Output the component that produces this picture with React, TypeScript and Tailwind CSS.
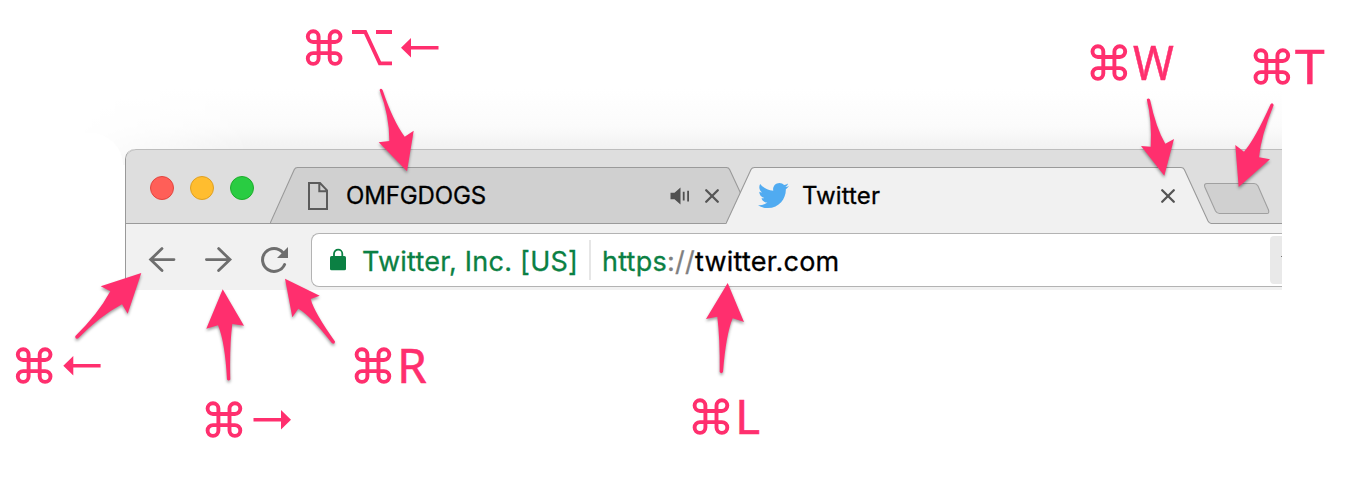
import React from "react";
import { FaTwitter } from "react-icons/fa";

const PINK = "#ff2f6e";

function CommandIcon({ x, y }: { x: number; y: number }) {
  return (
    <path
      transform={`translate(${x} ${y})`}
      d="M23.7 7.2v21.9a5.4 5.4 0 1 0 5.4-5.4H7.2a5.4 5.4 0 1 0 5.4 5.4V7.2a5.4 5.4 0 1 0-5.4 5.4h21.9a5.4 5.4 0 1 0-5.4-5.4z"
      fill="none"
      stroke={PINK}
      strokeWidth="3.9"
    />
  );
}

const commands: [number, number][] = [
  [306, 29.4],
  [1090.7, 44.4],
  [1253.7, 48.4],
  [16, 347.4],
  [205.8, 401.4],
  [354.8, 347.4],
  [692.8, 398.4],
];

const pointers = [
  "M379.6 90Q380.8 87.7 382.6 90Q393 121 404.7 136.7L413.7 130.7L407 171.3L378.7 142.3L389.3 141Q389.5 116 379.6 90Z",
  "M1146.8 99.5Q1148.3 97.3 1150 99.5Q1156 128 1165.3 143.7L1174 139L1164.3 175.7L1141 146L1150.7 146.7Q1152 120 1146.8 99.5Z",
  "M1270.7 104Q1272.5 102 1273.7 105Q1261 136 1259 157.3L1270 159.3L1238.7 187L1235.3 145L1244 151.7Q1255 139 1270.7 104Z",
  "M75.4 336Q74.6 339.3 78 338.5Q100 316 122 304.3L127.7 313.7L141.3 273L100.7 286.3L110.3 291.3Q98 314 75.4 336Z",
  "M227 379.5Q228.7 381.7 230.3 379.5Q229.5 345 232.3 324L244 325.7L222.7 289.3L206.3 328.7L218 325.3Q225 342 227 379.5Z",
  "M332 343.3Q335 344.6 335 341.5Q314 312 310.7 299L319.7 295.7L285 278.7L292.3 317.3L298.3 308.7Q311 316 332 343.3Z",
  "M719.7 372Q721.3 374.3 723 372Q726 334 732.7 318.3L744 322L727.7 283L706 319L717.3 316.7Q720 338 719.7 372Z",
];

function Annotations() {
  return (
    <div className="pointer-events-none absolute inset-0">
      <svg width="1348" height="502" viewBox="0 0 1348 502" className="absolute left-0 top-0">
        <g className="drop-shadow-[0_2px_1.5px_rgba(0,0,0,0.38)]">
          {pointers.map((d) => (
            <path key={d} d={d} fill={PINK} />
          ))}
        </g>
        {commands.map(([x, y]) => (
          <CommandIcon key={x} x={x} y={y} />
        ))}
        <path d="M352 32h13.2l14.6 31.3H392M376 32h16" fill="none" stroke={PINK} strokeWidth="3.8" />
        <path d="M401 47.7l10-9.7v8h27.5v3.4H411v8z" fill={PINK} />
        <path d="M63.3 365.7l10-9.7v8h27.3v3.4H73.3v8z" fill={PINK} />
        <path d="M291 419.7l-10-9.7v8h-27.5v3.4H281v8z" fill={PINK} />
      </svg>
      <Key className="left-[1133px] top-[27px] scale-x-[0.915]">W</Key>
      <Key className="left-[1295px] top-[31px] scale-x-[1.11]">T</Key>
      <Key className="left-[397px] top-[330px]">R</Key>
      <Key className="left-[735px] top-[381px]">L</Key>
    </div>
  );
}

function Key({ className, children }: { className: string; children: React.ReactNode }) {
  return (
    <span
      className={`absolute origin-left font-['Noto_Sans',sans-serif] text-[48px] leading-[70px] text-[#ff2f6e] [-webkit-text-stroke:0.5px_#ff2f6e] ${className}`}
    >
      {children}
    </span>
  );
}

function CloseIcon() {
  return (
    <svg width="16" height="16" viewBox="0 0 16 16" stroke="#555" strokeWidth="2.3" strokeLinecap="round">
      <path d="M2.2 2.2l11.6 11.6M13.8 2.2L2.2 13.8" />
    </svg>
  );
}

function TabStrip() {
  return (
    <div className="flex h-[75px] items-start rounded-tl-[10px] border-t border-[#bdbdbd] bg-[#dedede] shadow-[inset_0_-1px_0_#9a9a9a]">
      <div className="flex gap-4 pl-6 pt-[26px]">
        <i className="size-6 rounded-full border border-[#e2463f] bg-[#ff5f58]" />
        <i className="size-6 rounded-full border border-[#dfa023] bg-[#ffbd2f]" />
        <i className="size-6 rounded-full border border-[#1dad2b] bg-[#29cc42]" />
      </div>
      <div className="relative ml-4 mt-[16px] flex h-[59px] w-[456px] items-center">
        <svg width="474" height="59" className="absolute left-0 top-0">
          <path
            d="M0 57.5L24.3 3.6Q25.3 1.5 27.5 1.5H456.5Q458.6 1.5 459.6 3.6L471 28L458 57.5Z"
            fill="#d0d0d0"
            stroke="#9a9a9a"
            strokeWidth="1.1"
          />
        </svg>
        <svg width="22" height="30" viewBox="0 0 22 30" className="relative ml-[37px]" fill="none" stroke="#5b5b5b" strokeWidth="2">
          <path d="M2 2h11l7 7.3V28H2zM12.3 2v8.3H20" />
        </svg>
        <span className="relative ml-[17px] w-[324px] text-2xl leading-[30px] tracking-[-0.15px] text-black [-webkit-text-stroke:0.3px_black]">OMFGDOGS</span>
        <svg width="20" height="18" viewBox="0 0 20 18" className="relative shrink-0" fill="#505050">
          <path d="M0.5 5.8h4l6-5.3v17l-6-5.3h-4zM12.8 4.7h1.8v8.8h-1.8zM17.2 3.7H19v10.8h-1.8z" />
        </svg>
        <div className="relative ml-[14px]"><CloseIcon /></div>
      </div>
      <div className="relative mt-[16px] flex h-[59px] w-[484px] items-center">
        <svg width="486" height="59" className="absolute left-0 top-0">
          <path d="M0 58L25 3.6Q26 1.5 28.5 1.5H455Q457.3 1.5 458.3 3.6L482 55Q483.4 57.5 485 57.5V59H0Z" fill="#f1f1f1" />
          <path
            d="M0 57.5L25 3.6Q26 1.5 28.5 1.5H455Q457.3 1.5 458.3 3.6L482 55Q483.3 57.5 485.5 57.5"
            fill="none"
            stroke="#9a9a9a"
            strokeWidth="1.1"
          />
        </svg>
        <FaTwitter className="relative ml-[32px] size-[31px] text-[#50abf1]" />
        <span className="relative ml-[13px] w-[358px] text-2xl leading-[30px] tracking-[0.1px] text-black [-webkit-text-stroke:0.3px_black]">Twitter</span>
        <div className="relative"><CloseIcon /></div>
      </div>
      <svg width="70" height="34" viewBox="1202 182 70 34" className="-ml-2 mt-[32px]">
        <path
          d="M1207 183.5H1254Q1256.7 183.5 1258 186L1268.5 210Q1269.5 213.5 1267 213.5H1219.5Q1217 213.5 1215.5 211L1204.8 187Q1203.7 183.5 1207 183.5Z"
          fill="#d0d0d0"
          stroke="#a0a0a0"
          strokeWidth="1.1"
        />
      </svg>
    </div>
  );
}

function Toolbar() {
  return (
    <div className="flex h-[66px] items-start bg-[#f1f1f1] pt-[9px]">
      <svg
        width="146"
        height="30"
        viewBox="146 245 146 30"
        className="ml-5 mt-3 shrink-0"
        fill="none"
        stroke="#6e6e6e"
        strokeWidth="2.8"
        strokeLinecap="round"
      >
        <path d="M162 248.6L150.6 259.6L162 270.6M151 259.6H174" />
        <path d="M218.6 248.6L230 259.6L218.6 270.6M206.4 259.6H229.4" />
        <path d="M282.8 252.4A11.5 11.5 0 1 0 284.6 264.5" strokeWidth="3" />
        <path d="M288 247V258H277Z" fill="#6e6e6e" stroke="none" />
      </svg>
      <div className="ml-[19px] flex h-[54px] flex-1 items-center rounded-l-lg border border-r-0 border-[#b3b3b3] bg-white text-[27px] leading-[40px] tracking-[0.24px]">
        <svg width="18" height="24" viewBox="329 249 18 24" className="ml-[17px] shrink-0">
          <rect x="330" y="257" width="16" height="14.3" rx="1.6" fill="#0b8043" />
          <path d="M334 258V254.8A4.1 4.1 0 0 1 342.3 254.8V258" fill="none" stroke="#0b8043" strokeWidth="1.8" />
        </svg>
        <span className="ml-[15px] w-[227px] whitespace-nowrap pt-[3px] text-[#0b8043] [-webkit-text-stroke:0.3px_#0b8043]">Twitter, Inc. [US]</span>
        <i className="h-10 w-0.5 bg-[#e6e6e6]" />
        <span className="ml-[11px] flex-1 whitespace-nowrap pt-[3px] text-black [-webkit-text-stroke:0.3px]">
          <span className="text-[#0b8043]">https</span>
          <span className="text-[#808080]">://</span>twitter.com
        </span>
        <div className="flex h-12 w-3 items-center justify-end rounded-l bg-[#e9e9e9]">
          <i className="mb-2 h-px w-px bg-[#777]" />
        </div>
      </div>
    </div>
  );
}

export default function App() {
  return (
    <main className="relative h-[502px] w-[1348px] overflow-hidden bg-white font-[Inter,sans-serif]">
      <div className="flex h-[149px] w-[1282px] items-end pl-[70px]">
        <div className="-mb-4 h-[76px] w-full shrink-0 bg-linear-to-b from-white via-[#fbfbfb] to-[#ebebeb] [mask-image:linear-gradient(to_right,transparent,black_180px)]" />
      </div>
      <div className="absolute left-0 top-[133px] h-[157px] w-[123px] rounded-tr-[32px] bg-white" />
      <section className="relative ml-[125px] h-[141px] w-[1157px] overflow-hidden rounded-tl-[10px] border-l border-[#999]">
        <TabStrip />
        <Toolbar />
      </section>
      <Annotations />
    </main>
  );
}
